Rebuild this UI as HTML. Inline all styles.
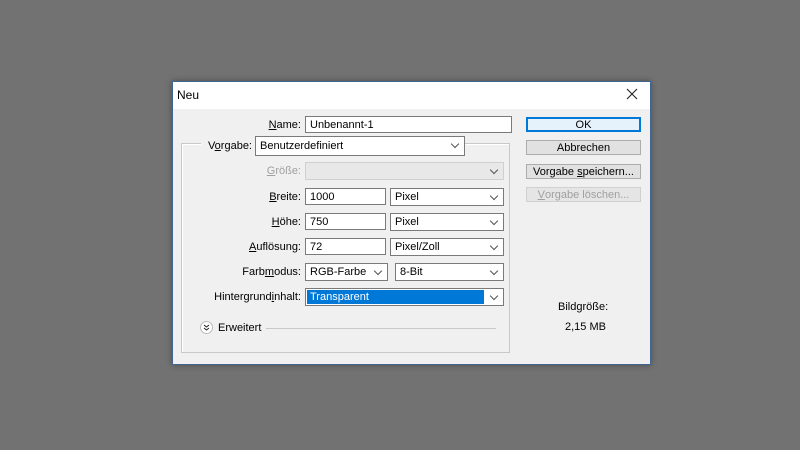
<!DOCTYPE html>
<html><head><style>
*{box-sizing:border-box;margin:0;padding:0}
body{width:800px;height:450px;background:#727272;position:relative;font-family:"Liberation Sans",sans-serif;font-size:11px;color:#000;overflow:hidden}
.dlg{position:absolute;left:172px;top:81px;width:479px;height:284px;background:#f0f0f0;border:1px solid #3e6690;box-shadow:0 0 6px rgba(0,0,0,.35)}
.title{position:absolute;left:0;top:0;width:477px;height:27px;background:#fff}
.a{position:absolute}
.lbl{position:absolute;text-align:right;white-space:nowrap;line-height:18px}
.in{position:absolute;background:#fff;border:1px solid #7a7a7a;height:17px;line-height:16px;padding-left:4px;white-space:nowrap}
.sel{position:absolute;background:#fff;border:1px solid #7a7a7a;height:18px;line-height:17px;padding-left:4px}
.sel:after{content:"";position:absolute;right:6px;top:4px;width:5px;height:5px;border-right:1px solid #555;border-bottom:1px solid #555;transform:rotate(45deg)}
.btn{position:absolute;left:353px;width:115px;height:15px;background:#e1e1e1;border:1px solid #adadad;display:flex;align-items:center;justify-content:center}
u{text-decoration:underline}
</style></head><body>
<div class="dlg">
<div class="title"></div>
<div class="a" style="left:4px;top:6px;font-size:12px">Neu</div>
<svg class="a" style="left:453px;top:6px" width="12" height="12"><path d="M1 1L11 11M11 1L1 11" stroke="#222" stroke-width="1.1"/></svg>

<div class="lbl" style="right:349px;top:34px"><u>N</u>ame:</div>
<div class="in" style="left:132px;top:34px;width:207px">Unbenannt-1</div>

<div class="a" style="left:8px;top:61px;width:329px;height:210px;border:1px solid #c8c8c8;box-shadow:1px 1px 0 #fff inset"></div>
<div class="a" style="left:28px;top:53px;width:230px;height:22px;background:#f0f0f0"></div>
<div class="lbl" style="right:398px;top:55px">V<u>o</u>rgabe:</div>
<div class="sel" style="left:82px;top:54px;width:210px;height:20px;line-height:19px">Benutzerdefiniert</div>

<div class="lbl" style="right:349px;top:80px;color:#a0a0a0"><u>G</u>röße:</div>
<div class="sel" style="left:132px;top:80px;width:199px;background:#e8e8e8;border-color:#d0d0d0"></div>

<div class="lbl" style="right:349px;top:106px"><u>B</u>reite:</div>
<div class="in" style="left:132px;top:106px;width:81px">1000</div>
<div class="sel" style="left:217px;top:106px;width:114px">Pixel</div>

<div class="lbl" style="right:349px;top:131px"><u>H</u>öhe:</div>
<div class="in" style="left:132px;top:131px;width:81px">750</div>
<div class="sel" style="left:217px;top:131px;width:114px">Pixel</div>

<div class="lbl" style="right:349px;top:156px"><u>A</u>uflösung:</div>
<div class="in" style="left:132px;top:156px;width:81px">72</div>
<div class="sel" style="left:217px;top:156px;width:114px">Pixel/Zoll</div>

<div class="lbl" style="right:349px;top:181px">Farb<u>m</u>odus:</div>
<div class="sel" style="left:132px;top:181px;width:83px">RGB-Farbe</div>
<div class="sel" style="left:222px;top:181px;width:109px">8-Bit</div>

<div class="lbl" style="right:349px;top:206px">Hintergrund<u>i</u>nhalt:</div>
<div class="sel" style="left:132px;top:206px;width:199px;padding:1px"><div style="background:#0078d7;color:#fff;width:177px;height:14px;line-height:15px;padding-left:3px">Transparent</div></div>

<div class="a" style="left:27px;top:239px;width:13px;height:13px;border-radius:50%;background:#fff;border:1px solid #bbb"></div>
<svg class="a" style="left:30px;top:242px" width="7" height="7"><path d="M1 1L3.5 3L6 1M1 4L3.5 6L6 4" stroke="#222" fill="none" stroke-width="1"/></svg>
<div class="a" style="left:45px;top:240px">Erweitert</div>
<div class="a" style="left:93px;top:246px;width:230px;height:1px;background:#c8c8c8"></div>

<div class="btn" style="top:35px;border:2px solid #0078d7;background:#e5f1fb">OK</div>
<div class="btn" style="top:58px">Abbrechen</div>
<div class="btn" style="top:82px">Vorgabe&nbsp;<u>s</u>peichern...</div>
<div class="btn" style="top:105px;color:#a0a0a0;border-color:#d0d0d0;background:#e5e5e5"><u>V</u>orgabe löschen...</div>

<div class="a" style="left:385px;top:219px">Bildgröße:</div>
<div class="a" style="left:392px;top:239px">2,15 MB</div>
</div>
</body></html>
